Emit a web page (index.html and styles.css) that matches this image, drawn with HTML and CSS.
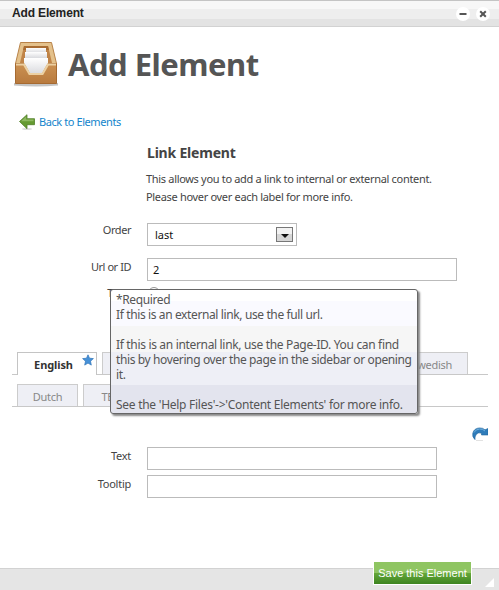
FILE: index.html
```html
<!DOCTYPE html>
<html lang="en">
<head>
<meta charset="utf-8">
<title>Add Element</title>
<link rel="stylesheet" href="styles.css">
</head>
<body>
<header class="titlebar">
  <span class="titlebar-text">Add Element</span>
  <span class="window-btn"><svg width="14" height="14" viewBox="0 0 14 14"><path d="M3.5 7h7" stroke="#555" stroke-width="2"/></svg></span>
  <span class="window-btn"><svg width="14" height="14" viewBox="0 0 14 14"><path d="M4.2 4.2l5.6 5.6M9.8 4.2l-5.6 5.6" stroke="#555" stroke-width="2"/></svg></span>
</header>
<main class="content">
  <div class="heading">
    <svg class="tray" width="46" height="48" viewBox="0 0 46 48">
      <defs>
        <linearGradient id="wood" x1="0" y1="0" x2="0" y2="1"><stop offset="0" stop-color="#cb9152"/><stop offset="1" stop-color="#b87a3e"/></linearGradient>
        <linearGradient id="paper" x1="0" y1="0" x2="0" y2="1"><stop offset="0" stop-color="#fff"/><stop offset="1" stop-color="#d9dade"/></linearGradient>
      </defs>
      <path d="M1 43h44v2.500q-22 2-44 0z" fill="#c4c4c4"/>
      <path d="M7.500 2.500h31l5 21h-41z" fill="#e4c18b" stroke="#b98349"/>
      <path d="M11 6h24l4.500 19H6.500z" fill="#c08448"/>
      <path d="M11 6h24l1 4H10z" fill="#a96c32"/>
      <path d="M13 8h20v5H13z" fill="url(#paper)"/>
      <path d="M12 12h22v6H12z" fill="url(#paper)"/>
      <path d="M11 18h24v16H11z" fill="url(#paper)"/>
      <path d="M2.500 23.500h8.500l5.500 10h13l5.500-10h8.500v20h-41z" fill="url(#wood)" stroke="#a66a31"/>
      <path d="M3 24.500h8l5.500 9.500h13l5.500-9.500h8" fill="none" stroke="#ecd0a2" stroke-width="2.200"/>
    </svg>
    <h1>Add Element</h1>
  </div>
  <a class="back">
    <svg width="16" height="17" viewBox="0 0 16 17"><ellipse cx="8" cy="15" rx="5" ry="1" fill="#ddd"/><path d="M.5 7.500L8 .7v4h7.500v6H8v4z" fill="#659a31" stroke="#517f2a" stroke-width=".8"/><path d="M2 7.200L7.200 2.600v3h7.300v1.600z" fill="#8db860"/></svg>
    <span>Back to Elements</span>
  </a>
  <section class="intro">
    <h2>Link Element</h2>
    <p>This allows you to add a link to internal or external content.<br>Please hover over each label for more info.</p>
  </section>
  <div class="row order-row">
    <label>Order</label>
    <div class="field select"><span>last</span><i class="dropdown"></i></div>
  </div>
  <div class="row url-row">
    <label>Url or ID</label>
    <div class="field url">2</div>
  </div>
  <div class="row type-row">
    <label>Type</label>
    <i class="radio"></i>
  </div>
  <nav class="tabs first-tabs">
    <span class="tab active">English<svg class="star" width="12" height="12" viewBox="0 0 12 12"><path d="M6 .8l1.500 3.400 3.900.4-2.900 2.600.8 3.900L6 9.100l-3.300 2 .8-3.900L.6 4.600l3.900-.4z" fill="#4691d8" stroke="#2f74b8" stroke-width=".7"/></svg></span>
    <span class="tab filler"></span>
    <span class="tab swedish">Swedish</span>
  </nav>
  <nav class="tabs second-tabs">
    <span class="tab dutch">Dutch</span>
    <span class="tab test">TEST</span>
  </nav>
  <div class="refresh">
    <svg width="16" height="14" viewBox="0 0 16 14"><path d="M4 13.500h7" stroke="#e2e2e2"/><path d="M3 12.600Q0 9.800 .8 6.200 2 1.200 7.500.9 11 .8 13 2.800L16 1.500V8H9.500l0-1.800Q6.500 4.800 4.200 7.500 2.600 9.800 3 12.600z" fill="#2f7cba" stroke="#20649e" stroke-width=".6"/><path d="M2 5.500Q3.800 2.200 7.500 2 11 1.900 13 4" fill="none" stroke="#6fb0de"/></svg>
  </div>
  <div class="row text-row">
    <label>Text</label>
    <div class="field wide"></div>
  </div>
  <div class="row tooltip-row">
    <label>Tooltip</label>
    <div class="field wide"></div>
  </div>
</main>
<footer class="footer">
  <button class="save">Save this Element</button>
  <svg class="grip" width="9" height="9" viewBox="0 0 9 9"><path d="M9 0v9H0z" fill="#fff"/></svg>
</footer>
<aside class="hint">
  <span>*Required</span><br>
  <span class="t2">If this is an external link, use the full url.</span><br>
  <br>
  <span class="t3">If this is an internal link, use the Page-ID. You can find</span><br>
  <span class="t4">this by hovering over the page in the sidebar or opening</span><br>
  <span>it.</span><br>
  <br>
  <span class="t5">See the 'Help Files'-&gt;'Content Elements' for more info.</span>
</aside>
</body>
</html>
```
FILE: styles.css
```css
* { box-sizing: border-box; }
body {
  margin: 0;
  width: 499px;
  height: 590px;
  display: flex;
  flex-direction: column;
  position: relative;
  overflow: hidden;
  background: #fff;
  color: #444;
  font: 11px/18px "Noto Sans", sans-serif;
}
.titlebar {
  height: 27px;
  flex: none;
  display: flex;
  align-items: center;
  gap: 6px;
  padding: 1px 9px 0 12px;
  border-top: 1px solid #c4c4c4;
  border-bottom: 1px solid #d2d2d2;
  background: linear-gradient(#f7f7f7 8px, #eee 8px 18px, #e3e3e3 18px);
}
.titlebar-text {
  flex: 1;
  margin-top: -2px;
  color: #222;
  font: bold 12px/20px "Liberation Sans", sans-serif;
  letter-spacing: -0.15px;
}
.window-btn {
  width: 14px;
  height: 14px;
  border-radius: 50%;
  background: #fff;
}
.window-btn svg { display: block; }
.content { flex: 1; min-height: 0; }
.heading {
  display: flex;
  height: 78px;
  padding: 13px 0 0 13px;
}
h1 {
  margin: 3px 0 0 9px;
  font-size: 31px;
  line-height: 42px;
  letter-spacing: -0.5px;
  color: #555;
  white-space: nowrap;
}
.back {
  display: flex;
  height: 18px;
  margin: 8px 0 0 19px;
  gap: 4px;
  color: #1485cc;
  letter-spacing: -0.42px;
}
.back svg { margin-top: 1px; }
.intro { height: 85px; margin: 11px 0 0 147px; }
h2 {
  margin: 0;
  font-size: 14px;
  line-height: 22px;
  letter-spacing: -0.2px;
  color: #444;
}
p { margin: 6px 0 0 -1px; white-space: nowrap; letter-spacing: -0.32px; }
.row { display: flex; gap: 16px; }
.row label {
  width: 131px;
  text-align: right;
  line-height: 15px;
  letter-spacing: -0.45px;
}
.order-row { margin-top: -4px; height: 35px; }
.order-row label { margin-top: -1px; }
.field {
  height: 23px;
  border: 1px solid #bbb;
  background: #fff;
  color: #111;
  padding: 0 5px;
  line-height: 22px;
}
.select {
  width: 150px;
  display: flex;
  align-items: center;
  justify-content: space-between;
  padding: 0 3px 0 7px;
}
.dropdown {
  width: 17px;
  height: 15px;
  border: 1px solid #777;
  background: linear-gradient(#f2f2f2 50%, #d6d6d6 50%);
  display: flex;
  align-items: center;
  justify-content: center;
  padding-top: 3px;
}
.dropdown::after {
  content: "";
  border: 4px solid transparent;
  border-top-color: #111;
  border-bottom: 0;
}
.url-row { height: 27px; }
.url { width: 310px; }
.type-row { height: 67px; gap: 17px; }
.type-row label { letter-spacing: -0.2px; }
.radio { width: 12px; height: 12px; margin-top: 2px; border: 1px solid #999; border-radius: 50%; }
.tabs {
  display: flex;
  gap: 5px;
  width: 476px;
  margin-left: 12px;
  padding-left: 5px;
  border-bottom: 1px solid #c8c8c8;
}
.tab {
  height: 22px;
  border: 1px solid #ccc;
  border-bottom: 0;
  background: #eeeff5;
  color: #888;
  text-align: center;
  line-height: 23px;
  letter-spacing: -0.3px;
}
.first-tabs { height: 23px; }
.active {
  position: relative;
  width: 80px;
  height: 23px;
  background: #fff;
  border-color: #c4c4c4;
  color: #333;
  font-weight: bold;
  padding-right: 7px;
  letter-spacing: -0.1px;
}
.star { position: absolute; right: 2px; top: 1px; }
.filler { width: 292px; }
.swedish { width: 69px; text-align: right; padding-right: 15px; }
.second-tabs { margin-top: 9px; height: 23px; }
.dutch { width: 61px; }
.test { width: 60px; }
.refresh { height: 40px; display: flex; justify-content: flex-end; padding: 20px 11px 0 0; }
.wide { width: 290px; }
.text-row { height: 28px; }
.tooltip-row { height: 23px; }
.url-row label, .text-row label, .tooltip-row label { padding-top: 1px; }
.text-row label, .tooltip-row label { letter-spacing: -0.25px; }
.footer {
  height: 22px;
  flex: none;
  display: flex;
  justify-content: flex-end;
  align-items: flex-start;
  gap: 13px;
  padding-right: 5px;
  border-top: 1px solid #d2d2d2;
  background: #e5e5e5;
}
.save {
  width: 99px;
  height: 24px;
  margin-top: -8px;
  padding: 0;
  border: 1px solid #fff;
  background: linear-gradient(#8fc562 50%, #65a83a 50%, #3d8420);
  color: #fff;
  font: 11px/20px "Liberation Sans", sans-serif;
  white-space: nowrap;
}
.grip { margin-top: 9px; }
.hint {
  position: absolute;
  left: 110px;
  top: 289px;
  width: 308px;
  height: 125px;
  padding: 2px 5px;
  border: 1px solid #666;
  border-radius: 3px;
  background: linear-gradient(#fff 11px, #fafaff 11px 36px, #f6f6f6 36px 62px, #eeeff6 62px 95px, #e3e4ee 95px);
  box-shadow: 2px 2px 2px #888;
  color: #555;
  font-size: 12px;
  line-height: 15px;
  letter-spacing: -0.38px;
  white-space: nowrap;
}
.hint .t3 { letter-spacing: -0.33px; }
.hint .t5 { letter-spacing: -0.27px; }
```
